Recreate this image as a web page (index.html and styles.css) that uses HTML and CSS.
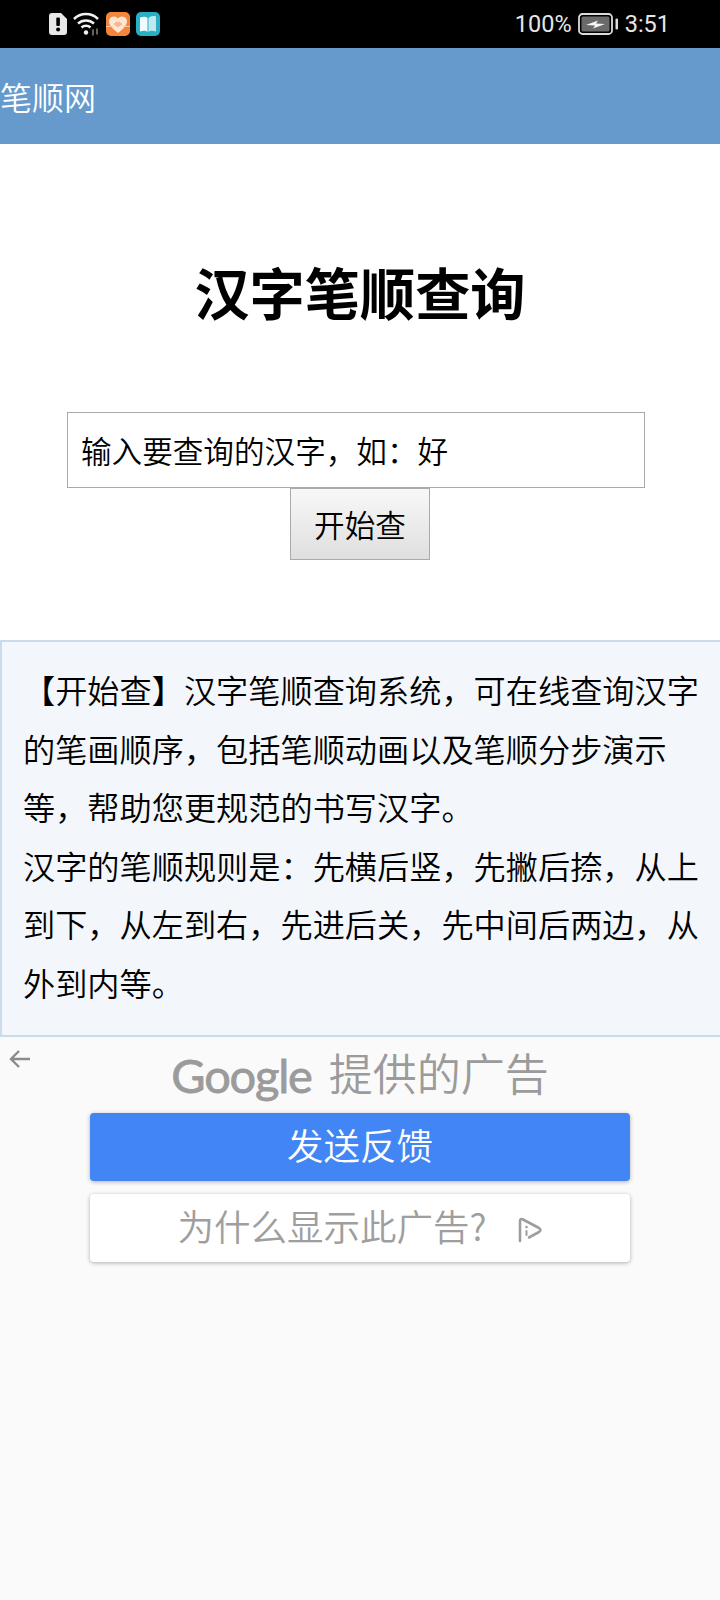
FILE: index.html
```html
<!DOCTYPE html>
<html lang="zh-CN">
<head>
    <meta charset="UTF-8">
    <meta name="viewport" content="width=device-width, initial-scale=1.0">
    <title>汉字笔顺查询</title>
    <link rel="stylesheet" href="styles.css">
</head>
<body>
    <div class="status-bar">
        <div class="status-left">
            <svg width="18" height="22" viewBox="0 0 18 22">
                <path d="M3 0h9l6 6v13a3 3 0 0 1-3 3H3a3 3 0 0 1-3-3V3a3 3 0 0 1 3-3z" fill="#e8e8e8"/>
                <rect x="7.300" y="4.500" width="3.600" height="8.500" rx="1" fill="#000"/>
                <circle cx="9.100" cy="16.500" r="2" fill="#000"/>
            </svg>
            <svg width="27" height="24" viewBox="0 0 27 24" fill="none" stroke="#f2f2f2" stroke-width="2.500">
                <path d="M1 7a17 17 0 0 1 24 0"/>
                <path d="M5 11.500a12 12 0 0 1 16 0"/>
                <path d="M8.500 15.500a6.500 6.500 0 0 1 9 0"/>
                <circle cx="13" cy="20.500" r="2.200" fill="#f2f2f2" stroke="none"/>
                <path d="M20 17.500v6M24 16.500v6" stroke="#6e6e6e" stroke-width="1.800"/>
            </svg>
            <svg width="24" height="24" viewBox="0 0 24 24">
                <rect width="24" height="24" rx="5" fill="#f5853a"/>
                <path d="M12 21C6 16.500 3 13 3 9A5 5 0 0 1 12 6.500 5 5 0 0 1 21 9c0 4-3 7.500-9 12z" fill="#fde6d6"/>
                <path d="M0 14.500h7M17 14.500h7" stroke="#fbc9a6" stroke-width="1"/>
                <path d="M7.500 12l3-2.500 1.500 1 1.500-1 3 2.500-4.500 3.500z" fill="#f9b789"/>
            </svg>
            <svg width="24" height="24" viewBox="0 0 24 24">
                <rect width="24" height="24" rx="5" fill="#2aaec4"/>
                <path d="M4 5.500c3-1 6-1 7.500 .5v14C10 18.500 7 18.500 4 19.500z" fill="#f2fbfc"/>
                <path d="M20 4.500c-3-1-6 0-7.500 1.500v14c1.500-1.500 4.500-1.500 7.500-.5z" fill="#bfe9ef"/>
            </svg>
        </div>
        <div class="status-right">
            <span class="status-text">100%</span>
            <svg class="battery" width="41" height="22" viewBox="0 0 41 22">
                <rect x="1" y="1" width="33" height="20" rx="3.500" fill="none" stroke="#dcdcdc" stroke-width="1.800"/>
                <rect x="3.500" y="3.500" width="28" height="15" rx="1.500" fill="#6a6a6a"/>
                <path d="M8 12l12-4.500-2 3 9 .5-12 4.500 2-3z" fill="#f6f6f6"/>
                <rect x="37.500" y="5.500" width="2.500" height="11" rx="1" fill="#dcdcdc"/>
            </svg>
            <span class="status-text">3:51</span>
        </div>
    </div>

    <header class="app-bar">笔顺网</header>

    <main class="search">
        <h1>汉字笔顺查询</h1>
        <div class="search-input">输入要查询的汉字&#xFF0C;如&#xFF1A;好</div>
        <button class="search-btn">开始查</button>
    </main>

    <section class="intro">
        <p>【开始查】汉字笔顺查询系统&#xFF0C;可在线查询汉字的笔画顺序&#xFF0C;包括笔顺动画以及笔顺分步演示等&#xFF0C;帮助您更规范的书写汉字。</p>
        <p>汉字的笔顺规则是&#xFF1A;先横后竖&#xFF0C;先撇后捺&#xFF0C;从上到下&#xFF0C;从左到右&#xFF0C;先进后关&#xFF0C;先中间后两边&#xFF0C;从外到内等。</p>
    </section>

    <section class="ad-panel">
        <svg class="ad-back" width="22" height="20" viewBox="0 0 22 20" fill="none" stroke="#8c8c8c" stroke-width="2.400">
            <path d="M21 10H2M10 2l-8 8 8 8"/>
        </svg>
        <div class="ad-title"><span class="ad-logo">Google</span><span>提供的广告</span></div>
        <button class="ad-btn ad-btn-primary">发送反馈</button>
        <button class="ad-btn ad-btn-plain">
            <span>为什么显示此广告?</span>
            <svg class="ad-choices" width="26" height="26" viewBox="0 0 26 26" fill="none" stroke="#9e9e9e" stroke-width="2.600" stroke-linecap="round" stroke-linejoin="round">
                <path d="M3 24V4Q3 1 6 2.500L22 11Q25 13 22 15L12 20.500"/>
                <path d="M9.500 14v4" stroke-width="2"/>
                <circle cx="9.500" cy="10" r="1.300" fill="#9e9e9e" stroke="none"/>
            </svg>
        </button>
    </section>
</body>
</html>
```

FILE: styles.css
```css
body {
    margin: 0;
    height: 1600px;
    display: flex;
    flex-direction: column;
    background: #fff;
    color: #000;
    font-family: "Noto Sans CJK SC", "Noto Sans", sans-serif;
}

.status-bar {
    height: 48px;
    background: #000;
    display: flex;
    justify-content: space-between;
    align-items: center;
    padding: 0 50px 0 49px;
}

.status-left {
    display: flex;
    align-items: center;
    gap: 6px;
}

.status-right {
    display: flex;
    align-items: center;
    gap: 6px;
}

.status-text {
    font-family: Roboto, sans-serif;
    font-size: 23.500px;
    color: #e6e6e6;
}

.app-bar {
    height: 96px;
    background: #6699cc;
    color: #fff;
    font-size: 32px;
    font-weight: 350;
    line-height: 96px;
}

.search {
    height: 496px;
    display: flex;
    flex-direction: column;
    align-items: center;
}

h1 {
    margin: 0;
    padding-top: 113px;
    height: 155px;
    font-size: 55.200px;
    line-height: 68px;
    font-weight: 700;
}

.search-input {
    width: 578px;
    height: 76px;
    box-sizing: border-box;
    margin-right: 8px;
    border: 1px solid #aaa;
    padding-left: 13px;
    font-size: 30.600px;
    font-weight: 350;
    line-height: 75px;
    background: #fff;
}

.search-btn {
    width: 140px;
    height: 72px;
    border: 1px solid #aaa;
    border-radius: 0;
    padding: 0;
    font-family: inherit;
    font-size: 30.600px;
    font-weight: 350;
    color: #000;
    background: linear-gradient(#f8f8f8, #dfdfdf);
}

.intro {
    height: 397px;
    box-sizing: border-box;
    border: 2px solid #c8dcee;
    border-right: 0;
    background: #f3f7fb;
    padding: 18px 15px 0 21px;
    font-size: 32.200px;
    font-weight: 350;
    line-height: 58.600px;
}

.intro p {
    margin: 0;
}

.ad-panel {
    flex: 1;
    position: relative;
    background: #fafafa;
    display: flex;
    flex-direction: column;
    align-items: center;
}

.ad-back {
    position: absolute;
    left: 9px;
    top: 12px;
}

.ad-title {
    height: 70px;
    margin-bottom: 6px;
    display: flex;
    justify-content: center;
    align-items: center;
    gap: 17px;
    font-size: 44px;
    font-weight: 350;
    color: #9b9b9b;
}

.ad-logo {
    padding-top: 5px;
    font-family: Lato, sans-serif;
    font-size: 47px;
    font-weight: 400;
    letter-spacing: -1.200px;
    -webkit-text-stroke: 0.800px #9b9b9b;
}

.ad-btn {
    width: 540px;
    height: 68px;
    padding: 0 0 6px;
    border: 0;
    border-radius: 4px;
    font-family: inherit;
    font-size: 36.500px;
    font-weight: 350;
    box-shadow: 0 1px 4px rgba(0, 0, 0, 0.3);
    display: flex;
    justify-content: center;
    align-items: center;
}

.ad-btn-primary {
    background: #4285f4;
    color: #fff;
    margin-bottom: 13px;
}

.ad-btn-plain {
    background: #fff;
    color: #9e9e9e;
    gap: 30px;
}

.ad-choices {
    margin-top: 10px;
}
```
